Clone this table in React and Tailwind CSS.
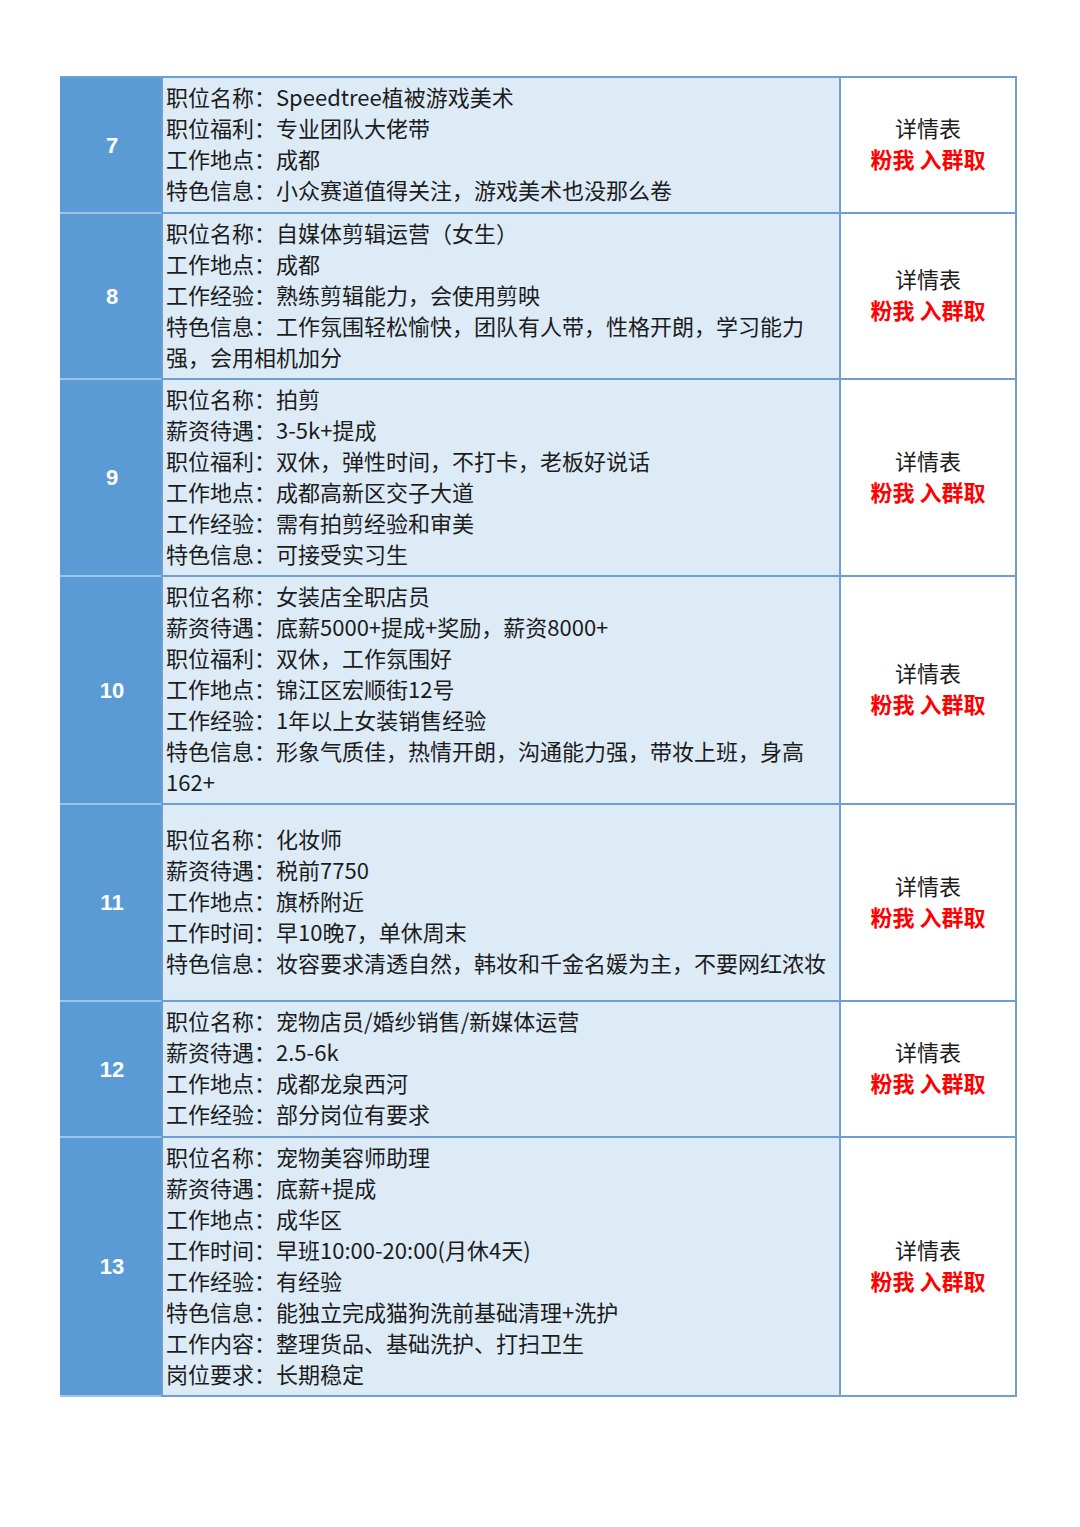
import React from 'react';

const rows = [
  {
    no: '7',
    h: 'h-[136px]',
    lines: [
      '职位名称：Speedtree植被游戏美术',
      '职位福利：专业团队大佬带',
      '工作地点：成都',
      '特色信息：小众赛道值得关注，游戏美术也没那么卷',
    ],
  },
  {
    no: '8',
    h: 'h-[166px]',
    lines: [
      '职位名称：自媒体剪辑运营（女生）',
      '工作地点：成都',
      '工作经验：熟练剪辑能力，会使用剪映',
      '特色信息：工作氛围轻松愉快，团队有人带，性格开朗，学习能力',
      '强，会用相机加分',
    ],
  },
  {
    no: '9',
    h: 'h-[197px]',
    lines: [
      '职位名称：拍剪',
      '薪资待遇：3-5k+提成',
      '职位福利：双休，弹性时间，不打卡，老板好说话',
      '工作地点：成都高新区交子大道',
      '工作经验：需有拍剪经验和审美',
      '特色信息：可接受实习生',
    ],
  },
  {
    no: '10',
    h: 'h-[228px]',
    lines: [
      '职位名称：女装店全职店员',
      '薪资待遇：底薪5000+提成+奖励，薪资8000+',
      '职位福利：双休，工作氛围好',
      '工作地点：锦江区宏顺街12号',
      '工作经验：1年以上女装销售经验',
      '特色信息：形象气质佳，热情开朗，沟通能力强，带妆上班，身高',
      '162+',
    ],
  },
  {
    no: '11',
    h: 'h-[197px]',
    lines: [
      '职位名称：化妆师',
      '薪资待遇：税前7750',
      '工作地点：旗桥附近',
      '工作时间：早10晚7，单休周末',
      '特色信息：妆容要求清透自然，韩妆和千金名媛为主，不要网红浓妆',
    ],
  },
  {
    no: '12',
    h: 'h-[136px]',
    lines: [
      '职位名称：宠物店员/婚纱销售/新媒体运营',
      '薪资待遇：2.5-6k',
      '工作地点：成都龙泉西河',
      '工作经验：部分岗位有要求',
    ],
  },
  {
    no: '13',
    h: 'h-[259px]',
    lines: [
      '职位名称：宠物美容师助理',
      '薪资待遇：底薪+提成',
      '工作地点：成华区',
      '工作时间：早班10:00-20:00(月休4天)',
      '工作经验：有经验',
      '特色信息：能独立完成猫狗洗前基础清理+洗护',
      '工作内容：整理货品、基础洗护、打扫卫生',
      '岗位要求：长期稳定',
    ],
  },
];

function JobRow({ row }) {
  return (
    <div className={`flex ${row.h}`}>
      <div className="w-[101px] shrink-0 flex items-center justify-center pl-[3px] bg-[#5b9bd5] border-b-2 border-[#9cc3e8] text-white text-[22px] font-bold font-['Liberation_Sans',Arial,sans-serif]">
        {row.no}
      </div>
      <div className="w-[678px] shrink-0 flex flex-col justify-center bg-[#ddebf7] border-l-2 border-b-2 border-[#6e9fd3] pl-[3px] pb-[4px] text-[22px] leading-[31px] text-[#1c1c1c]">
        {row.lines.map((l, i) => (
          <div key={i} className="whitespace-nowrap">
            {l}
          </div>
        ))}
      </div>
      <div className="flex-1 flex flex-col items-center justify-center pb-[4px] bg-white border-l-2 border-r-2 border-b-2 border-[#6e9fd3] text-[22px] leading-[31px]">
        <div className="text-[#1c1c1c]">详情表</div>
        <div className="text-[#ff0000] font-bold">粉我 入群取</div>
      </div>
    </div>
  );
}

export default function App() {
  return (
    <div className="w-[1080px] h-[1527px] bg-white pt-[76px] pl-[60px] font-['Noto_Sans_CJK_SC','Noto_Sans',sans-serif]">
      <div className="w-[957px] border-t-2 border-[#6e9fd3]">
        {rows.map((r) => (
          <JobRow key={r.no} row={r} />
        ))}
      </div>
    </div>
  );
}
